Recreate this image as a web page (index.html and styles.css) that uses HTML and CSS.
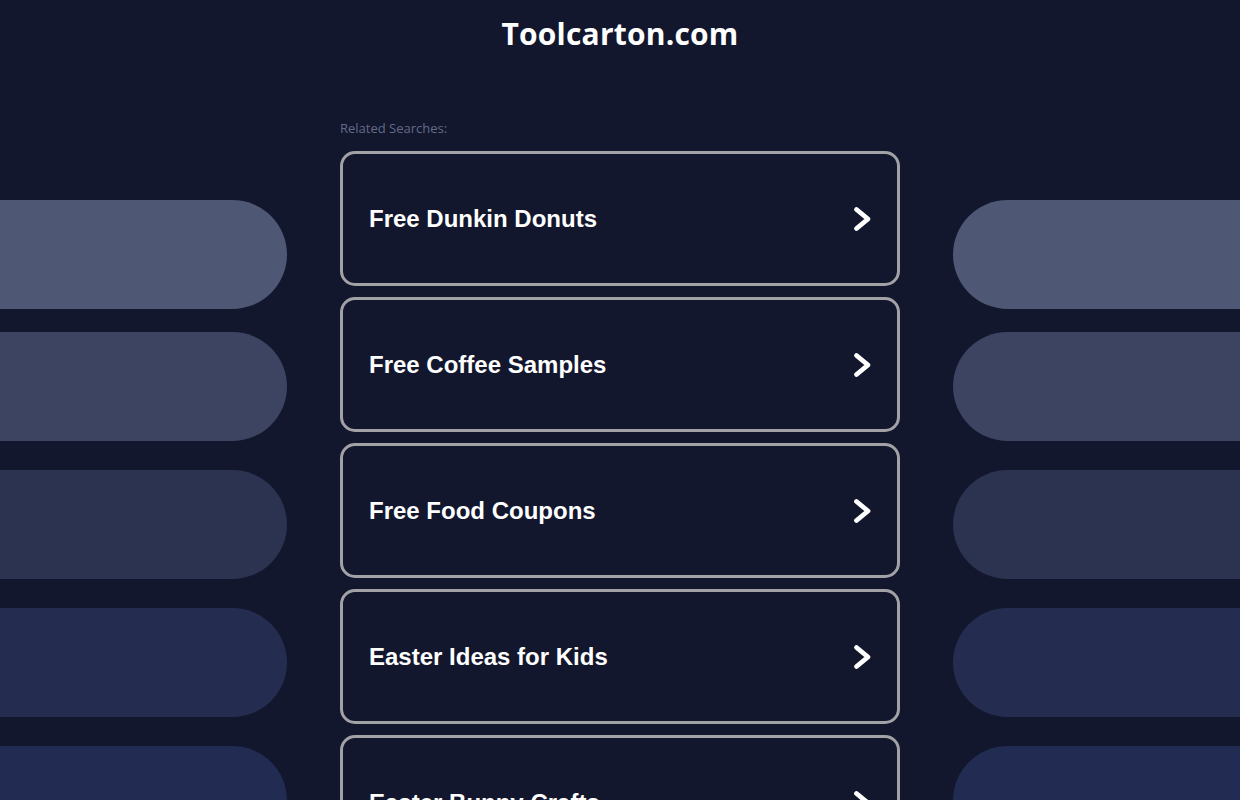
FILE: index.html
```html
<!DOCTYPE html>
<html lang="en">
<head>
<meta charset="utf-8">
<title>Toolcarton.com</title>
<link rel="stylesheet" href="styles.css">
</head>
<body>
<div class="page">
  <aside class="side side-left">
    <div class="pill p1"></div>
    <div class="pill p2"></div>
    <div class="pill p3"></div>
    <div class="pill p4"></div>
    <div class="pill p5"></div>
  </aside>
  <main class="main">
    <header class="header"><h1 class="site-title">Toolcarton.com</h1></header>
    <div class="related">Related Searches:</div>
    <ul class="cards">
      <li class="card"><span class="card-text">Free Dunkin Donuts</span><svg class="chev" viewBox="0 0 20 26" width="20" height="26"><path d="M4.5 3.5 L16 13 L4.5 22.5" fill="none" stroke="#fff" stroke-width="4.8" stroke-linecap="round" stroke-linejoin="round"/></svg></li>
      <li class="card"><span class="card-text">Free Coffee Samples</span><svg class="chev" viewBox="0 0 20 26" width="20" height="26"><path d="M4.5 3.5 L16 13 L4.5 22.5" fill="none" stroke="#fff" stroke-width="4.8" stroke-linecap="round" stroke-linejoin="round"/></svg></li>
      <li class="card"><span class="card-text">Free Food Coupons</span><svg class="chev" viewBox="0 0 20 26" width="20" height="26"><path d="M4.5 3.5 L16 13 L4.5 22.5" fill="none" stroke="#fff" stroke-width="4.8" stroke-linecap="round" stroke-linejoin="round"/></svg></li>
      <li class="card"><span class="card-text">Easter Ideas for Kids</span><svg class="chev" viewBox="0 0 20 26" width="20" height="26"><path d="M4.5 3.5 L16 13 L4.5 22.5" fill="none" stroke="#fff" stroke-width="4.8" stroke-linecap="round" stroke-linejoin="round"/></svg></li>
      <li class="card"><span class="card-text">Easter Bunny Crafts</span><svg class="chev" viewBox="0 0 20 26" width="20" height="26"><path d="M4.5 3.5 L16 13 L4.5 22.5" fill="none" stroke="#fff" stroke-width="4.8" stroke-linecap="round" stroke-linejoin="round"/></svg></li>
    </ul>
  </main>
  <aside class="side side-right">
    <div class="pill p1"></div>
    <div class="pill p2"></div>
    <div class="pill p3"></div>
    <div class="pill p4"></div>
    <div class="pill p5"></div>
  </aside>
</div>
</body>
</html>
```
FILE: styles.css
```css
html, body {
  margin: 0;
  padding: 0;
  background: #12172d;
  height: 800px;
  overflow: hidden;
}
.page {
  display: flex;
  width: 1240px;
  font-family: "Liberation Sans", Arial, sans-serif;
}
.side {
  width: 287px;
  flex: 0 0 287px;
  padding-top: 200px;
  display: flex;
  flex-direction: column;
}
.pill {
  height: 109px;
  flex: 0 0 109px;
}
.p2 { margin-top: 23px; }
.p3, .p4, .p5 { margin-top: 29px; }
.side-left .pill { border-radius: 0 55px 55px 0; }
.side-right .pill { border-radius: 55px 0 0 55px; }
.p1 { background: #4e5773; }
.p2 { background: #3c4462; }
.p3 { background: #2b3351; }
.p4 { background: #242d50; }
.p5 { background: #222b51; }
.main {
  width: 560px;
  flex: 0 0 560px;
  margin: 0 53px;
}
.header {
  height: 70px;
  text-align: center;
}
.site-title {
  margin: 0;
  font-family: "Open Sans", sans-serif;
  font-weight: 700;
  font-size: 30px;
  line-height: 68px;
  color: #ffffff;
  letter-spacing: 0.2px;
}
.related {
  margin-top: 50px;
  font-family: "Open Sans", sans-serif;
  font-size: 13px;
  line-height: 16px;
  color: #646a87;
}
.cards {
  list-style: none;
  margin: 15px 0 0;
  padding: 0;
  display: flex;
  flex-direction: column;
  gap: 11px;
}
.card {
  box-sizing: border-box;
  height: 135px;
  border: 3px solid #a2a2a6;
  border-radius: 15px;
  display: flex;
  align-items: center;
  justify-content: space-between;
  padding: 0 25px 0 26px;
}
.card-text {
  color: #ffffff;
  font-weight: 700;
  font-size: 24px;
}
.chev {
  display: block;
}
```
